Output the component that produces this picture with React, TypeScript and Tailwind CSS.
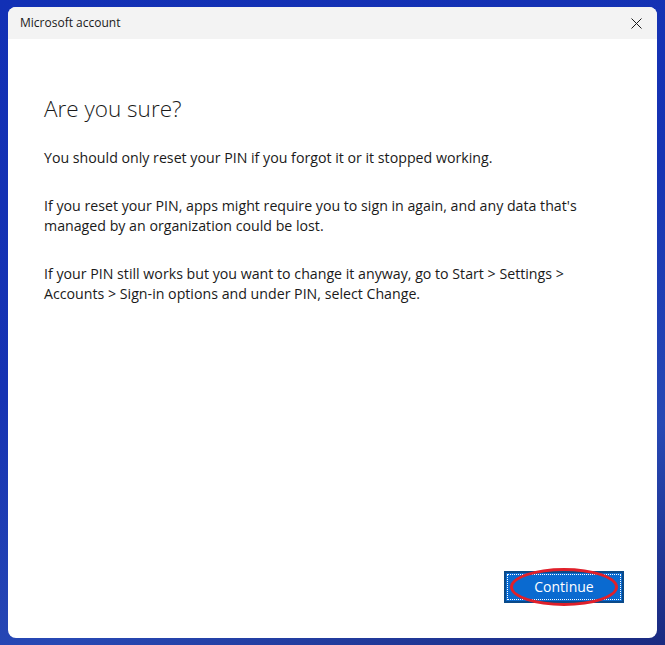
export default function App() {
  return (
    <div className="w-[665px] h-[645px] overflow-hidden bg-[linear-gradient(160deg,#1230b5_0%,#1633b3_45%,#2748b4_75%,#1a2a80_100%)] pt-[7px] pl-[8px] font-['Segoe_UI','Open_Sans',sans-serif]">
      <div className="w-[649px] h-[631px] bg-white rounded-[8px] overflow-hidden flex flex-col">
        {/* Title bar */}
        <div className="h-[32px] bg-[#f3f3f3] flex items-center justify-between pl-[12px] pr-[15px] shrink-0">
          <span className="text-[12px] text-[#1a1a1a]">Microsoft account</span>
          <svg width="11" height="11" viewBox="0 0 11 11" className="text-[#1a1a1a]">
            <path d="M0.5 0.5L10.5 10.5M10.5 0.5L0.5 10.5" stroke="currentColor" strokeWidth="1" />
          </svg>
        </div>

        {/* Content */}
        <div className="flex-1 flex flex-col px-[36px] pt-[54px] pb-[35px] text-[#1a1a1a]">
          <h1 className="text-[22.5px] leading-[32px] font-light">Are you sure?</h1>
          <div className="mt-[23px] text-[14.2px] leading-[20px] flex flex-col gap-[28px]">
            <p>You should only reset your PIN if you forgot it or it stopped working.</p>
            <p>
              If you reset your PIN, apps might require you to sign in again, and any data that's
              <br />
              managed by an organization could be lost.
            </p>
            <p>
              If your PIN still works but you want to change it anyway, go to Start &gt; Settings &gt;
              <br />
              Accounts &gt; Sign-in options and under PIN, select Change.
            </p>
          </div>

          <div className="mt-auto flex justify-end">
            <div className="relative mr-[-3px]">
              <button className="w-[120px] h-[32px] bg-[#0a6ad0] border-2 border-[#0a4a8a] p-[1px]">
                <div className="w-full h-full border border-dotted border-white flex items-center justify-center">
                  <span className="text-white text-[14px] leading-none">Continue</span>
                </div>
              </button>
              <div className="absolute left-[6px] top-[-3px] w-[108px] h-[38px] rounded-[50%] border-[3px] border-[#e0202a] pointer-events-none" />
            </div>
          </div>
        </div>
      </div>
    </div>
  );
}
